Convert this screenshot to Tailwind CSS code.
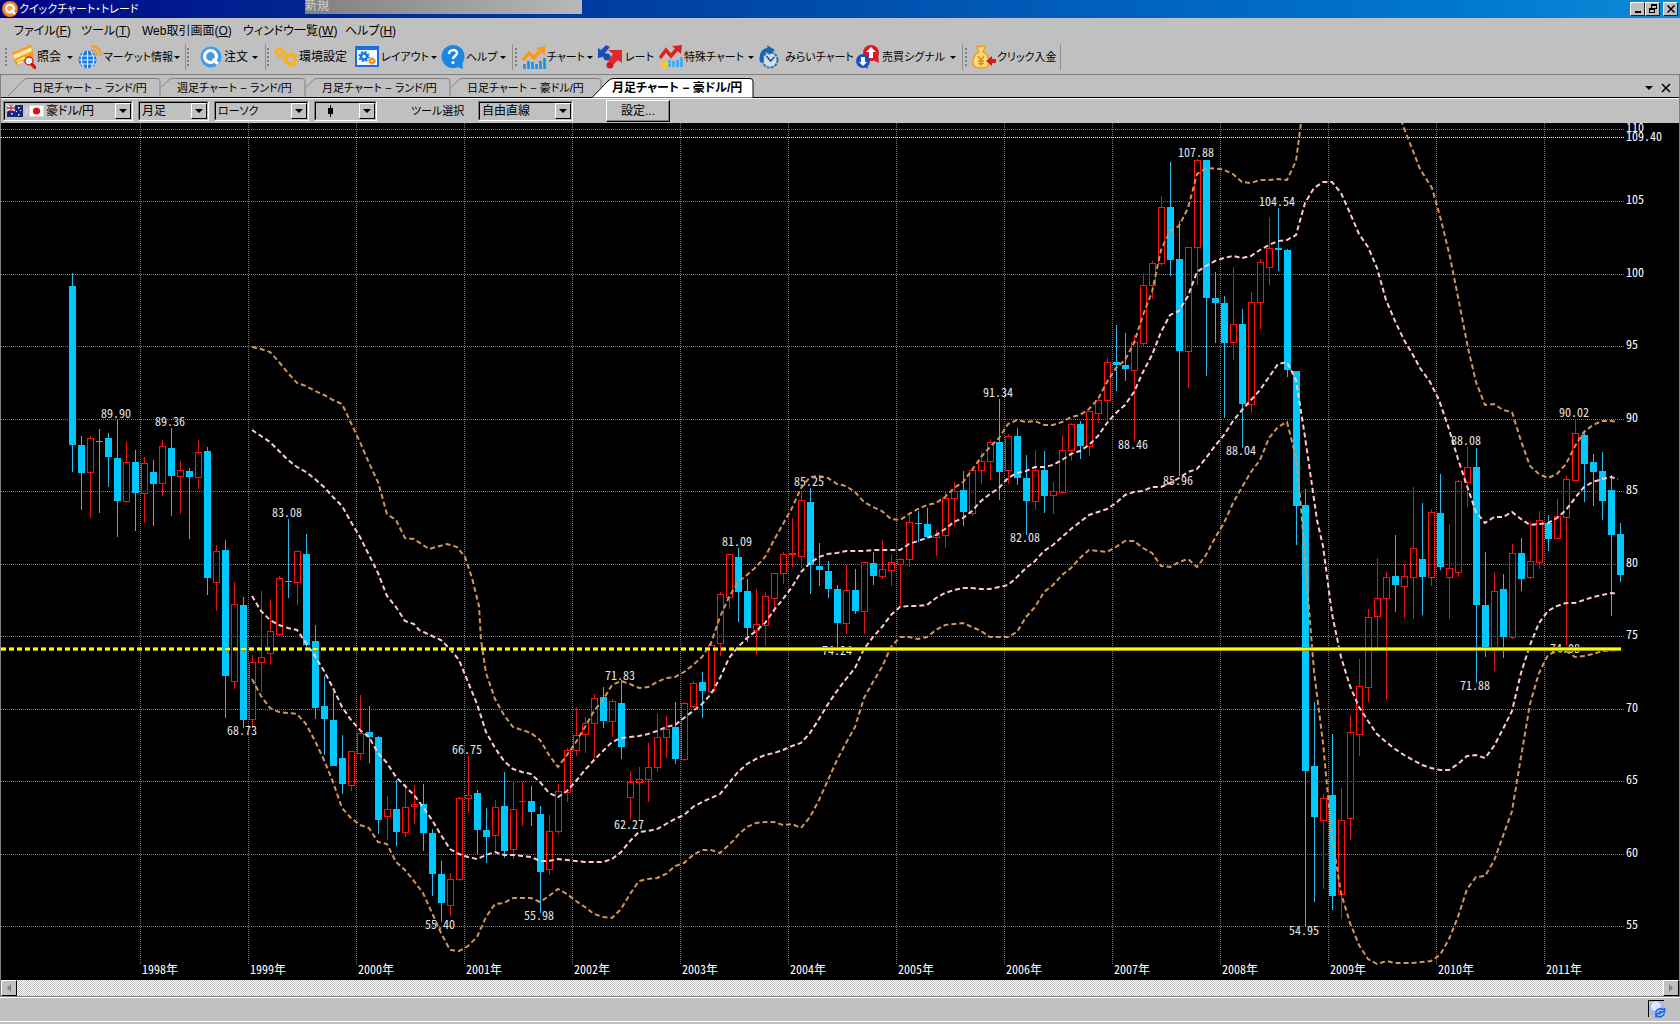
<!DOCTYPE html>
<html lang="ja">
<head>
  <meta charset="UTF-8" />
  <meta name="viewport" content="width=device-width,initial-scale=1" />
  <title>クイックチャート・トレード</title>
  <script src="https://cdn.jsdelivr.net/npm/@tailwindcss/browser@4"></script>
</head>
<body class="flex h-screen flex-col overflow-hidden bg-[#c0c0c0] font-['Liberation_Sans','Noto_Sans_CJK_JP',sans-serif] text-[12px] leading-4 text-black [font-feature-settings:'palt']">

  <!-- title bar -->
  <header class="relative flex h-[18px] shrink-0 items-center bg-linear-to-r from-[#000084] to-[#1088d8] pl-[2px] pr-[2px] text-white">
    <svg class="size-4" viewBox="0 0 16 16">
      <circle cx="8" cy="8" r="8" fill="#f08020" />
      <circle cx="8" cy="8" r="6" fill="#f6a050" />
      <circle cx="8" cy="7.5" r="3.8" fill="none" stroke="#fff" stroke-width="2" />
      <path d="M9 9l4 4" stroke="#fff" stroke-width="2" />
    </svg>
    <h1 class="ml-px text-[11px]">クイックチャート・トレード</h1>
    <div class="absolute left-[305px] top-0 h-[14px] w-[277px] bg-linear-to-r from-[#808080] to-[#b8b8b8] text-[12px] leading-[13px] text-[#d0d0d0]">新規</div>
    <div class="ml-auto flex text-black">
      <button aria-label="最小化" class="flex h-[14px] w-[15px] items-center justify-center border border-t-white border-l-white border-r-[#202020] border-b-[#202020] bg-[#c0c0c0]">
        <svg class="h-[10px] w-3" viewBox="0 0 12 10"><path d="M3 8h6" stroke="#000" stroke-width="2" /></svg>
      </button>
      <button aria-label="元に戻す" class="flex h-[14px] w-[15px] items-center justify-center border border-t-white border-l-white border-r-[#202020] border-b-[#202020] bg-[#c0c0c0]">
        <svg class="h-[10px] w-3" viewBox="0 0 12 10" fill="none" stroke="#000" shape-rendering="crispEdges"><path d="M4.500 3.500v-3h5v4h-2M4 1.500h6M2.500 4.500h5v4h-5zM2 5.500h6" /></svg>
      </button>
      <button aria-label="閉じる" class="ml-[3px] flex h-[14px] w-[15px] items-center justify-center border border-t-white border-l-white border-r-[#202020] border-b-[#202020] bg-[#c0c0c0]">
        <svg class="h-[10px] w-3" viewBox="0 0 12 10"><path d="M2.500 1.500l7 7m0-7l-7 7" stroke="#000" stroke-width="1.500" /></svg>
      </button>
    </div>
  </header>

  <!-- menu -->
  <nav class="flex h-[26px] shrink-0 items-center pl-[14px] whitespace-nowrap">
    <button class="w-[67px] text-left">ファイル(<u>F</u>)</button>
    <button class="w-[61px] text-left">ツール(<u>T</u>)</button>
    <button class="w-[101px] text-left">Web取引画面(<u>O</u>)</button>
    <button class="w-[102px] text-left">ウィンドウ一覧(<u>W</u>)</button>
    <button class="w-[60px] text-left">ヘルプ(<u>H</u>)</button>
  </nav>

  <!-- toolbar -->
  <div class="flex h-[30px] shrink-0 items-center whitespace-nowrap pb-1" id="toolbar">
    <span class="ml-[5px] mr-[5px] h-[18px] w-[2px] bg-[repeating-linear-gradient(#808080_0_2px,transparent_2px_4px)]"></span>
    <button class="flex w-[66px] items-center gap-px">
      <svg class="size-6 shrink-0" viewBox="0 0 24 24">
        <path d="M0 9q0-2 2-2L18 0q2 0 2 2l2 9q0 2-2 2L6 20q-2 0-3-2z" fill="#f9a01b" />
        <path d="M1 10l18-7.500 1 3.500L2 14z" fill="#ffe9a6" />
        <path d="M5 16l8-3.500M6 18.500l5-2" stroke="#fff3c0" stroke-width="1.500" />
        <circle cx="17" cy="16" r="4" fill="#e8f2ff" stroke="#c03030" stroke-width="1.500" />
        <path d="M20 19.500l3 3" stroke="#e01010" stroke-width="3.500" stroke-linecap="round" />
      </svg>
      照会
      <span class="ml-auto mr-[5px] border-x-[3px] border-t-[3px] border-x-transparent border-t-black"></span>
    </button>
    <button class="flex w-[107px] items-center gap-px text-[11px]">
      <svg class="size-6 shrink-0" viewBox="0 0 24 24" fill="none">
        <circle cx="9.500" cy="14.500" r="9" fill="#1c78dc" />
        <path d="M1.500 11h16M1 15h17M2 19h15M9.500 5.500v18M6 6.500c-3.500 5-3.500 11 0 16M13 6.500c3.500 5 3.500 11 0 16" stroke="#d8ecff" stroke-width="1.200" />
        <path d="M13 5c3.500 0 6 2.500 6 6M13 1c6 0 10 4 10 10" stroke="#f5a020" stroke-width="2.400" />
      </svg>
      マーケット情報
      <span class="ml-auto mr-[5px] border-x-[3px] border-t-[3px] border-x-transparent border-t-black"></span>
    </button>
    <span class="h-[26px] w-px bg-[#909090]"></span>
    <span class="ml-px mr-[10px] h-[18px] w-[2px] bg-[repeating-linear-gradient(#808080_0_2px,transparent_2px_4px)]"></span>
    <button class="flex w-[62px] items-center gap-px">
      <svg class="size-6 shrink-0" viewBox="0 0 24 24" fill="none">
        <circle cx="12" cy="12" r="12" fill="#a4c8ec" />
        <circle cx="12" cy="12" r="10.500" fill="#4c96da" />
        <circle cx="11.500" cy="11.500" r="6" stroke="#fff" stroke-width="3.200" />
        <path d="M14 14l5 5" stroke="#fff" stroke-width="3.200" />
      </svg>
      注文
      <span class="ml-auto mr-[3px] border-x-[3px] border-t-[3px] border-x-transparent border-t-black"></span>
    </button>
    <span class="ml-1 h-[26px] w-px bg-[#909090]"></span>
    <span class="ml-px mr-[5px] h-[18px] w-[2px] bg-[repeating-linear-gradient(#808080_0_2px,transparent_2px_4px)]"></span>
    <button class="flex w-[81px] items-center gap-px">
      <svg class="size-6 shrink-0" viewBox="0 0 24 24" fill="none" stroke="#f9b21c">
        <circle cx="6" cy="7.500" r="3.200" stroke-width="2.600" /><circle cx="6" cy="7.500" r="5" stroke-width="1.800" stroke-dasharray="2 1.900" />
        <circle cx="16.500" cy="14.500" r="4.400" stroke-width="3.200" /><circle cx="16.500" cy="14.500" r="6.700" stroke-width="2" stroke-dasharray="2.800 2.460" />
      </svg>
      環境設定
    </button>
    <button class="flex w-[86px] items-center gap-[2px] text-[11px]">
      <svg class="size-6 shrink-0" viewBox="0 0 24 24" fill="none">
        <path d="M0 1h24v21H0z" fill="#1a6ee0" /><path d="M2 5h20v15H2z" fill="#f4faff" />
        <circle cx="9" cy="11.500" r="3" stroke="#1478d8" stroke-width="2.400" /><circle cx="9" cy="11.500" r="4.800" stroke="#1478d8" stroke-width="1.600" stroke-dasharray="2 1.770" />
        <circle cx="17" cy="16" r="2" stroke="#f58a20" stroke-width="2" /><circle cx="17" cy="16" r="3.300" stroke="#f58a20" stroke-width="1.200" stroke-dasharray="1.300 1.290" />
      </svg>
      レイアウト
      <span class="ml-auto mr-[5px] border-x-[3px] border-t-[3px] border-x-transparent border-t-black"></span>
    </button>
    <button class="flex w-[68px] items-center gap-px text-[11px]">
      <svg class="size-6 shrink-0" viewBox="0 0 24 24">
        <circle cx="12" cy="11.500" r="11.500" fill="#1c86e0" /><path d="M14 21l8 3-1-8z" fill="#1c86e0" />
        <path d="M8 9c0-5 8-5 8-1 0 3-4 3-4 6" fill="none" stroke="#fff" stroke-width="2.500" /><circle cx="12" cy="17.500" r="1.600" fill="#fff" />
      </svg>
      ヘルプ
      <span class="ml-auto mr-[3px] border-x-[3px] border-t-[3px] border-x-transparent border-t-black"></span>
    </button>
    <span class="ml-[3px] h-[26px] w-px bg-[#909090]"></span>
    <span class="ml-[2px] mr-[5px] h-[18px] w-[2px] bg-[repeating-linear-gradient(#808080_0_2px,transparent_2px_4px)]"></span>
    <button class="flex w-[76px] items-center gap-px text-[11px]">
      <svg class="size-6 shrink-0" viewBox="0 0 24 24" fill="none">
        <path d="M2.500 24v-5m4 5v-8m4 8v-7m4 7v-5m4 5v-8m4 8V13" stroke="#1890e8" stroke-width="2.600" />
        <path d="M1 15l6-7 5 5 6-7" stroke="#f79a1c" stroke-width="3.500" /><path d="M14 3l9-2v9z" fill="#f79a1c" />
      </svg>
      チャート
      <span class="ml-auto mr-[5px] border-x-[3px] border-t-[3px] border-x-transparent border-t-black"></span>
    </button>
    <button class="flex w-[61px] items-center gap-[3px] text-[11px]">
      <svg class="size-6 shrink-0" viewBox="0 0 24 24">
        <path d="M12 2L7 8l3 3-10 2V3l3 2 5-5z" fill="#1450c0" /><circle cx="9" cy="12" r="3.500" fill="#1a48b0" />
        <circle cx="12" cy="20" r="3.500" fill="#d01818" /><path d="M10 5h14v13l-4-3-5 5-5-5 5-6z" fill="#e02828" />
      </svg>
      レート
    </button>
    <button class="flex w-[100px] items-center gap-px text-[11px]">
      <svg class="size-6 shrink-0" viewBox="0 0 24 24" fill="none">
        <path d="M10.500 22v-7m4 7v-6m4 6v-7m4 7v-10" stroke="#38a8f0" stroke-width="2.600" />
        <path d="M1 13l6-8 5 6 6-7" stroke="#e02020" stroke-width="3.500" /><path d="M13 1l10-1-1 9z" fill="#e02020" />
        <path d="M5.500 14l1.500 3.500 4 .5-3 2.500 1 3.500-3.500-2L2 24l1-3.500L0 18l4-.5z" fill="#ffc81e" />
      </svg>
      特殊チャート
      <span class="ml-auto mr-[5px] border-x-[3px] border-t-[3px] border-x-transparent border-t-black"></span>
    </button>
    <button class="flex w-[97px] items-center gap-[2px] text-[11px]">
      <svg class="size-6 shrink-0" viewBox="0 0 24 24" fill="none">
        <circle cx="11" cy="15" r="7.500" fill="#d4dde6" stroke="#2a78b4" stroke-width="2" stroke-dasharray="3 1" />
        <path d="M3 17C1 9 5 4 11 5" stroke="#1268b0" stroke-width="4" /><path d="M8 0l8 5-6 5z" fill="#1268b0" />
        <path d="M7.500 11l4 5 4-4" stroke="#1a5c96" stroke-width="1.600" />
      </svg>
      みらいチャート
    </button>
    <button class="flex w-[103px] items-center gap-[2px] text-[11px]">
      <svg class="size-6 shrink-0" viewBox="0 0 24 24">
        <circle cx="15" cy="8" r="8" fill="#d81c24" /><path d="M17 15l6 3-1-9z" fill="#d81c24" />
        <path d="M15 2l5 5h-3v6h-4V7h-3z" fill="#fff" />
        <circle cx="7" cy="16" r="7" fill="#1c50c0" /><path d="M8 21l4 3-1-6z" fill="#1c50c0" />
        <path d="M7 21l-4-4h2v-5h4v5h2z" fill="#fff" />
      </svg>
      売買シグナル
      <span class="ml-auto mr-[3px] border-x-[3px] border-t-[3px] border-x-transparent border-t-black"></span>
    </button>
    <span class="ml-[3px] h-[26px] w-px bg-[#909090]"></span>
    <span class="ml-[2px] mr-[5px] h-[18px] w-[2px] bg-[repeating-linear-gradient(#808080_0_2px,transparent_2px_4px)]"></span>
    <button class="flex w-[88px] items-center gap-px text-[11px]">
      <svg class="size-6 shrink-0" viewBox="0 0 24 24" fill="none">
        <path d="M5 1l3 1 2-1 3 1-2 5c4 2 6 6 6 10 0 4-2 6-8 6s-8-2-8-6c0-4 2-8 6-10z" fill="#ffdf7a" stroke="#f0a020" stroke-width="1.500" />
        <path d="M6 11l3 4 3-4M9 15v6M6 16h6M6 18.500h6" stroke="#e08a10" stroke-width="1.500" />
        <path d="M24 14v4h-4v3l-6-5 6-5v3z" fill="#d01c1c" />
      </svg>
      クリック入金
    </button>
    <span class="h-[26px] w-px bg-[#909090]"></span>
  </div>

  <!-- chart window -->
  <main class="flex min-h-0 flex-1 flex-col border-x border-t border-[#808080]">
    <div class="relative flex h-[23px] shrink-0 items-end border-b border-black pl-[6px] text-[11px]" role="tablist">
      <button role="tab" class="relative h-[19px] w-[154px] pl-[25px] text-left whitespace-nowrap">
        <svg class="absolute inset-0 h-[19px] w-[154px]" viewBox="0 0 154 19"><path d="M.5 18.500L16 2.500q2-2 4-2h130q3 0 3 3v15" fill="none" stroke="#808080" /></svg>
        <span class="relative">日足チャート − ランド/円</span>
      </button>
      <button role="tab" class="relative h-[19px] w-[145px] pl-4 text-left whitespace-nowrap">
        <svg class="absolute inset-0 h-[19px] w-[145px]" viewBox="0 0 145 19"><path d="M0 9.500L7 2.500q2-2 4-2h130q3 0 3 3v15" fill="none" stroke="#808080" /></svg>
        <span class="relative">週足チャート − ランド/円</span>
      </button>
      <button role="tab" class="relative h-[19px] w-[145px] pl-4 text-left whitespace-nowrap">
        <svg class="absolute inset-0 h-[19px] w-[145px]" viewBox="0 0 145 19"><path d="M0 9.500L7 2.500q2-2 4-2h130q3 0 3 3v15" fill="none" stroke="#808080" /></svg>
        <span class="relative">月足チャート − ランド/円</span>
      </button>
      <button role="tab" class="relative h-[19px] w-[151px] pl-4 text-left whitespace-nowrap">
        <svg class="absolute inset-0 h-[19px] w-[151px]" viewBox="0 0 151 19"><path d="M0 9.500L7 2.500q2-2 4-2h136q3 0 3 3v6" fill="none" stroke="#808080" /></svg>
        <span class="relative">日足チャート − 豪ドル/円</span>
      </button>
      <button role="tab" aria-selected="true" class="relative -mb-px -ml-[10px] h-5 w-[162px] pl-[20px] text-left text-[12px] font-bold whitespace-nowrap">
        <svg class="absolute inset-0 h-5 w-[162px]" viewBox="0 0 162 20"><path d="M0 19.500L16 3q3-2.500 5-2.500h137q3 0 3 3v16" fill="#fff" stroke="#000" /></svg>
        <span class="relative">月足チャート − 豪ドル/円</span>
      </button>
      <div class="mb-[4px] ml-auto mr-2 flex items-center gap-2">
        <button aria-label="タブ一覧" class="border-x-[4px] border-t-[4px] border-x-transparent border-t-black"></button>
        <button aria-label="タブを閉じる"><svg class="size-[10px]" viewBox="0 0 10 10"><path d="M1 1l8 8m0-8l-8 8" stroke="#000" stroke-width="1.500" /></svg></button>
      </div>
    </div>

    <form class="flex h-[25px] shrink-0 items-center border-t border-white pl-[2px]">
      <div class="relative h-5 w-[130px] border border-t-[#808080] border-l-[#808080] border-r-white border-b-white">
        <select aria-label="通貨ペア" class="block h-[18px] w-full appearance-none border border-t-black border-l-black border-r-[#c0c0c0] border-b-[#c0c0c0] bg-[#c0c0c0] pl-[41px] text-[12px] leading-4"><option>豪ドル/円</option></select>
        <svg class="pointer-events-none absolute left-[3px] top-[3px] h-3 w-[38px]" viewBox="0 0 38 12">
          <path d="M0 0h16v12H0z" fill="#142a80" /><path d="M0 0l8 6M8 0L0 6" stroke="#fff" stroke-width="1.500" /><path d="M4 0v6M0 3h8" stroke="#fff" stroke-width="2.500" /><path d="M4 0v6M0 3h8" stroke="#d02030" stroke-width="1.300" />
          <path d="M4 8h1.500v1.500H4zM11 2h1.500v1.500H11zM13 5h1v1h-1zM9 6h1v1H9zM11 9h1.500v1.500H11z" fill="#fff" />
          <path d="M20.500 2l-2 9" stroke="#e8e8e8" /><path d="M22.500.5h14v11h-14z" fill="#fff" stroke="#d8d8d8" /><circle cx="29.500" cy="6" r="3.600" fill="#e01010" />
        </svg>
        <span class="pointer-events-none absolute right-px top-px flex h-4 w-4 items-center justify-center border border-t-white border-l-white border-r-black border-b-black bg-[#c0c0c0]"><span class="border-x-[4px] border-t-[4px] border-x-transparent border-t-black"></span></span>
      </div>
      <div class="relative ml-[5px] h-5 w-[71px] border border-t-[#808080] border-l-[#808080] border-r-white border-b-white">
        <select aria-label="足種" class="block h-[18px] w-full appearance-none border border-t-black border-l-black border-r-[#c0c0c0] border-b-[#c0c0c0] bg-[#c0c0c0] pl-[2px] text-[12px] leading-4"><option>月足</option></select>
        <span class="pointer-events-none absolute right-px top-px flex h-4 w-4 items-center justify-center border border-t-white border-l-white border-r-black border-b-black bg-[#c0c0c0]"><span class="border-x-[4px] border-t-[4px] border-x-transparent border-t-black"></span></span>
      </div>
      <div class="relative ml-[5px] h-5 w-[95px] border border-t-[#808080] border-l-[#808080] border-r-white border-b-white">
        <select aria-label="チャート種類" class="block h-[18px] w-full appearance-none border border-t-black border-l-black border-r-[#c0c0c0] border-b-[#c0c0c0] bg-[#c0c0c0] pl-[2px] text-[11px] leading-4"><option>ローソク</option></select>
        <span class="pointer-events-none absolute right-px top-px flex h-4 w-4 items-center justify-center border border-t-white border-l-white border-r-black border-b-black bg-[#c0c0c0]"><span class="border-x-[4px] border-t-[4px] border-x-transparent border-t-black"></span></span>
      </div>
      <div class="relative ml-[5px] h-5 w-[63px] border border-t-[#808080] border-l-[#808080] border-r-white border-b-white">
        <select aria-label="ローソク幅" class="block h-[18px] w-full appearance-none border border-t-black border-l-black border-r-[#c0c0c0] border-b-[#c0c0c0] bg-[#c0c0c0]"><option></option></select>
        <svg class="pointer-events-none absolute left-[12px] top-[3px] h-3 w-[7px]" viewBox="0 0 7 12"><path d="M1 3h5v6H1zM3 0h1v12H3z" /></svg>
        <span class="pointer-events-none absolute right-px top-px flex h-4 w-4 items-center justify-center border border-t-white border-l-white border-r-black border-b-black bg-[#c0c0c0]"><span class="border-x-[4px] border-t-[4px] border-x-transparent border-t-black"></span></span>
      </div>
      <label for="tool" class="ml-[34px] w-[67px] text-[11px]">ツール選択</label>
      <div class="relative h-5 w-[95px] border border-t-[#808080] border-l-[#808080] border-r-white border-b-white">
        <select id="tool" class="block h-[18px] w-full appearance-none border border-t-black border-l-black border-r-[#c0c0c0] border-b-[#c0c0c0] bg-[#c0c0c0] pl-[2px] text-[12px] leading-4"><option>自由直線</option></select>
        <span class="pointer-events-none absolute right-px top-px flex h-4 w-4 items-center justify-center border border-t-white border-l-white border-r-black border-b-black bg-[#c0c0c0]"><span class="border-x-[4px] border-t-[4px] border-x-transparent border-t-black"></span></span>
      </div>
      <button type="button" class="ml-[33px] h-[22px] w-[64px] border border-t-white border-l-white border-r-black border-b-black text-[12px] shadow-[inset_-1px_-1px_0_#808080]">設定...</button>
    </form>

    <div class="min-h-0 flex-1 bg-black">
      <svg id="chart" class="block size-full font-['Noto_Sans_CJK_JP',sans-serif] text-[12px]" viewBox="1 123 1678 857" role="img" aria-label="豪ドル/円 月足"></svg>
    </div>

    <!-- scroll bar -->
    <div class="flex h-4 shrink-0 justify-between bg-[repeating-conic-gradient(#c0c0c0_0_25%,#fff_0_50%)] bg-size-[2px_2px]">
      <button aria-label="左へ" class="flex w-4 items-center justify-center border border-t-white border-l-white border-r-black border-b-black bg-[#c0c0c0]"><span class="border-y-[4px] border-r-[4px] border-y-transparent border-r-[#808080]"></span></button>
      <button aria-label="右へ" class="flex w-4 items-center justify-center border border-t-white border-l-white border-r-black border-b-black bg-[#c0c0c0]"><span class="border-y-[4px] border-l-[4px] border-y-transparent border-l-[#808080]"></span></button>
    </div>
  </main>

  <!-- status bar -->
  <footer class="mb-[2px] flex h-[26px] shrink-0 items-start justify-end border-t border-b border-t-[#808080] border-b-white pr-[14px] shadow-[inset_0_1px_0_#fff]">
    <svg class="mt-[3px] h-[18px] w-[18px]" viewBox="0 0 18 18" fill="none">
      <path d="M.5 17V.5H16" stroke="#000" />
      <circle cx="9" cy="8.500" r="7.500" fill="#9cbcf4" /><circle cx="8" cy="6.500" r="5" fill="#dce8ff" />
      <path d="M7.500 12c2-4 6-4 8-2M11 12h5.500V8M16.500 13.500c-2 4-6 4-8 2M13 13.500H8v4" stroke="#1068e0" stroke-width="1.600" />
    </svg>
  </footer>

  <script>
    // one row per month: U = rise, D = fall, then high, body top, body bottom, low
    const CANDLES = `
      D 273 286 445 472|D 436 445 473 510|U 436 438 472 518|D 429 441 442 513|D 433 438 457 487|D 420 458 501 537
      U 442 462 501 503|D 450 462 493 531|U 457 463 493 523|D 460 472 484 526|U 440 446 483 496|D 428 448 476 516
      U 461 470 476 514|D 468 471 477 539|U 440 452 477 489|D 447 451 578 595|U 545 551 582 611|D 540 550 676 718
      U 582 604 681 689|D 597 605 720 728|U 655 662 719 728|U 591 657 662 692|U 600 631 653 665|U 576 578 634 637
      D 519 581 582 598|U 550 551 582 605|D 534 554 645 647|D 625 641 708 719|D 676 706 719 755|D 692 720 766 766
      D 735 758 784 794|U 751 751 785 791|U 695 733 753 760|D 706 732 737 763|D 736 737 820 834|U 796 809 816 840
      D 780 809 832 846|U 784 807 832 837|U 785 804 806 824|D 784 804 833 851|D 829 833 874 896|D 861 874 903 922
      U 873 879 905 916|U 797 798 879 881|U 756 795 798 813|D 790 793 830 854|D 808 830 837 863|U 800 807 835 852
      D 772 806 851 858|U 781 809 849 859|U 782 801 801 826|D 786 801 812 826|D 806 814 872 913|U 815 831 869 875
      U 784 791 831 834|U 748 750 792 802|U 707 735 750 756|U 717 723 734 753|U 694 698 723 758|D 687 697 721 728
      U 699 701 721 737|D 680 703 747 759|U 771 782 797 820|U 767 779 782 820|U 743 767 779 802|U 714 737 767 772
      U 716 729 737 758|D 702 727 759 764|U 702 703 759 761|U 681 683 706 708|D 672 682 691 718|U 644 645 691 691
      U 592 594 643 656|U 554 554 597 609|D 548 557 592 622|D 579 591 628 642|U 589 624 630 655|U 592 596 625 646
      U 573 573 598 613|U 552 554 573 584|U 518 553 554 567|U 492 500 556 568|D 488 502 565 594|D 543 566 570 586
      D 561 571 589 598|D 585 589 623 647|U 565 590 623 634|D 569 590 611 614|U 562 562 611 634|D 552 563 576 585
      U 540 569 576 579|U 554 562 570 586|U 558 559 564 607|U 512 522 559 567|D 511 523 524 542|D 508 524 537 537
      U 530 535 537 556|U 491 498 535 548|U 482 491 498 526|D 471 490 512 526|U 470 470 513 516|U 452 461 470 484
      U 439 442 461 480|D 399 442 472 500|U 434 436 470 484|D 428 436 478 485|D 455 478 501 535|U 450 470 501 510
      D 451 470 496 513|U 482 491 495 514|U 435 450 492 494|U 423 424 450 461|D 421 424 446 459|U 411 411 446 456
      U 398 400 413 423|U 358 362 400 421|D 325 362 365 391|D 333 365 369 381|U 335 342 370 442|U 273 285 343 347
      U 261 263 285 299|U 196 207 263 266|D 162 207 260 276|D 221 259 351 476|U 247 247 351 388|U 159 160 247 285
      D 160 160 298 376|D 272 298 303 343|D 296 303 343 418|U 267 324 342 360|D 309 324 404 448|U 292 302 404 413
      U 259 262 302 329|U 217 248 267 285|D 208 248 250 271|D 249 250 370 377|D 371 371 506 545|D 489 505 771 927
      D 702 766 817 902|U 794 798 820 889|D 734 795 896 910|U 788 820 894 919|U 715 732 818 840|U 659 686 734 756
      U 609 617 687 702|U 558 598 616 651|U 572 577 598 700|D 535 576 585 612|U 564 576 586 618|U 487 548 577 619
      D 503 559 577 615|U 509 512 577 586|D 474 513 567 570|U 524 568 577 619|U 480 481 572 577|U 447 467 482 507
      D 448 467 605 683|D 552 605 647 657|U 572 591 647 671|D 574 589 637 658|U 544 553 637 639|D 538 553 579 591
      U 522 561 577 579|U 511 520 562 569|D 515 523 539 551|U 499 516 538 539|U 476 479 517 646|U 419 433 480 480
      D 430 435 464 502|D 454 462 472 506|D 452 471 501 520|D 475 490 535 616|D 523 534 575 582`;

    const BANDS = [
      ["#d2955a", "252,347 261,349 270,352 279,362 288,373 297,383 306,386 315,391 324,395 333,400 342,404 351,423 360,442 369,463 378,482 387,514 396,520 405,538 414,539 429,549 447,544 457,547 465,557 472,578 479,606 481,640 486,673 495,699 504,715 513,727 522,730 531,733 540,740 549,755 558,767 567,755 576,742 585,727 594,711 603,700 612,685 621,681 630,684 639,688 648,687 657,682 666,678 675,677 684,672 693,665 702,657 711,643 720,617 729,597 738,582 747,575 756,567 765,557 774,540 783,524 792,508 801,488 810,477 819,476 828,478 837,484 846,486 855,492 864,502 873,507 882,511 891,519 900,520 909,514 918,509 927,505 936,503 945,497 954,488 963,482 972,470 981,457 990,447 999,438 1008,424 1017,420 1026,422 1035,421 1044,425 1053,425 1062,422 1071,417 1080,415 1089,409 1098,399 1107,382 1116,368 1125,360 1134,343 1143,315 1152,292 1161,250 1170,231 1179,226 1188,208 1197,174 1206,168 1220,169 1224,170 1233,174 1242,182 1251,183 1260,180 1269,180 1278,179 1287,180 1296,161 1301,123 1307,80"],
      ["#d2955a", "1395,105 1402,123 1420,169 1432,188 1441,220 1450,257 1458,297 1468,348 1476,382 1485,405 1494,404 1503,410 1512,412 1521,441 1530,466 1539,474 1548,478 1557,474 1566,464 1575,446 1584,432 1593,425 1602,421 1611,421 1618,422"],
      ["#d2955a", "252,679 261,696 270,708 279,712 288,713 297,714 306,724 315,741 324,760 333,782 342,808 351,818 360,825 369,828 378,842 387,844 396,862 405,870 414,881 423,893 432,913 441,933 450,950 459,951 468,946 477,937 486,917 495,904 504,903 513,898 522,898 531,898 540,902 549,896 558,889 567,894 576,901 585,907 594,914 603,917 612,918 621,909 630,894 639,881 648,879 657,878 666,874 675,866 684,863 693,855 702,850 711,850 720,853 734,840 738,835 747,827 756,823 765,822 774,822 783,825 792,824 801,828 810,817 819,800 828,780 837,760 846,743 855,727 864,698 873,682 882,667 891,647 900,637 909,637 918,639 927,637 936,630 945,625 954,624 963,623 972,627 981,631 990,637 999,637 1008,637 1017,632 1026,617 1035,607 1044,592 1053,585 1062,575 1071,568 1080,558 1089,550 1098,551 1107,552 1116,547 1125,541 1134,541 1143,548 1152,553 1161,566 1170,567 1179,562 1188,559 1197,567 1206,555 1215,538 1224,523 1233,503 1242,487 1251,472 1260,460 1269,438 1278,427 1287,422 1296,457 1301,507 1306,571 1314,671 1323,743 1328,796 1332,836 1341,893 1350,923 1359,945 1368,959 1377,964 1387,961 1395,963 1404,963 1413,963 1422,962 1431,961 1440,955 1449,939 1458,917 1467,889 1476,877 1485,876 1494,861 1503,836 1512,811 1521,757 1530,704 1539,673 1548,655 1557,651 1566,651 1575,657 1584,656 1593,654 1602,651 1618,650"],
      ["#ffc8d2", "252,430 261,436 270,442 279,451 288,460 297,467 306,472 315,479 324,487 333,497 342,506 351,522 360,537 369,555 378,573 387,596 396,607 405,621 414,624 419,630 441,640 450,649 459,660 468,682 477,704 486,732 495,748 504,761 513,769 522,772 531,774 540,782 549,793 558,797 567,791 576,781 585,770 594,760 603,751 612,742 621,738 630,737 639,736 648,734 657,731 666,727 675,725 684,718 693,711 702,704 711,694 720,678 729,658 738,647 747,638 756,631 765,623 774,610 783,599 792,587 801,572 810,563 819,557 828,554 837,553 846,551 855,551 864,551 873,550 882,550 891,550 900,550 909,544 918,541 927,538 936,535 945,529 954,522 963,518 972,511 981,501 990,494 999,488 1008,478 1017,473 1026,471 1035,467 1044,467 1053,465 1062,460 1071,454 1080,451 1089,445 1098,436 1107,423 1116,413 1125,405 1134,392 1143,372 1152,355 1161,332 1170,315 1179,311 1188,296 1197,272 1206,266 1215,261 1224,258 1233,256 1242,258 1251,256 1260,250 1269,245 1278,241 1287,240 1296,235 1305,203 1314,188 1323,182 1332,182 1341,193 1350,213 1359,234 1368,247 1377,268 1386,300 1395,321 1404,340 1413,355 1420,368 1430,382 1439,400 1449,429 1458,459 1467,486 1476,512 1485,523 1494,517 1503,517 1512,512 1521,519 1530,525 1539,524 1548,523 1557,518 1566,510 1575,498 1584,487 1593,482 1602,479 1611,477 1618,479"],
      ["#ffc8d2", "252,596 261,611 270,620 279,625 288,628 297,630 306,643 315,656 324,671 333,688 342,707 351,720 360,730 369,737 378,753 387,763 396,777 405,786 414,795 423,807 432,820 441,835 450,849 459,854 468,857 477,859 486,855 495,852 504,855 513,855 522,856 531,857 540,861 549,861 558,859 567,860 576,861 585,862 594,862 603,862 612,859 621,852 630,841 639,832 648,831 657,829 666,824 675,819 684,815 693,807 702,802 711,798 720,794 729,783 738,772 747,764 756,759 765,755 774,753 783,750 792,746 801,743 810,733 819,719 828,704 837,691 846,679 855,668 864,649 873,637 882,627 891,615 900,607 909,606 918,606 927,605 936,598 945,593 954,590 963,588 972,588 981,589 990,589 999,587 1008,585 1017,577 1026,568 1035,561 1044,551 1053,545 1062,537 1071,529 1080,522 1089,515 1098,512 1107,509 1116,503 1125,495 1134,492 1143,491 1152,487 1161,487 1170,483 1179,478 1188,472 1197,469 1206,458 1215,446 1224,435 1233,421 1242,410 1251,400 1260,390 1269,377 1278,364 1287,362 1296,380 1305,437 1317,520 1323,546 1332,614 1341,657 1350,686 1359,707 1368,721 1377,734 1386,742 1395,749 1404,755 1413,760 1422,765 1431,768 1440,770 1449,770 1458,764 1467,756 1476,755 1485,758 1494,746 1503,729 1512,711 1521,673 1530,645 1539,623 1548,611 1557,606 1566,603 1575,603 1584,600 1593,597 1602,595 1611,593 1618,594"]
    ];

    // swing highs and lows: text, centre x, centre y
    const MARKS = [
      ["89.90", 116, 414], ["89.36", 170, 422], ["83.08", 287, 513], ["68.73", 242, 731], ["66.75", 467, 750],
      ["55.40", 440, 925], ["55.98", 539, 916], ["71.83", 620, 676], ["62.27", 629, 825], ["81.09", 737, 542],
      ["85.25", 809, 482], ["74.24", 837, 651], ["91.34", 998, 393], ["82.08", 1025, 538], ["88.46", 1133, 445],
      ["88.04", 1241, 451], ["85.96", 1178, 481], ["107.88", 1196, 153], ["104.54", 1277, 202], ["88.08", 1466, 441],
      ["90.02", 1574, 413], ["74.08", 1565, 649], ["71.88", 1475, 686], ["54.95", 1304, 931]
    ];

    const chart = document.getElementById("chart");

    function add(tag, attrs, text) {
      const el = document.createElementNS("http://www.w3.org/2000/svg", tag);
      for (const k in attrs) el.setAttribute(k, attrs[k]);
      if (text) el.textContent = text;
      chart.appendChild(el);
    }

    function line(x1, y1, x2, y2, stroke, extra) {
      add("line", { x1, y1, x2, y2, stroke, "shape-rendering": "crispEdges", ...extra });
    }

    const priceY = p => Math.floor(129 + (110 - p) * 14.5);

    // grid and axis labels
    for (let p = 110; p >= 55; p -= 5) {
      line(1, priceY(p) + 0.5, 1624, priceY(p) + 0.5, "#78785a", { "stroke-dasharray": "1 1" });
      add("text", { x: 1626, y: priceY(p) + 3, fill: "#fff", class: "[font-feature-settings:'hwid']" }, String(p));
    }
    for (let year = 1998; year <= 2011; year++) {
      const x = 140 + (year - 1998) * 108;
      line(x + 0.5, 123, x + 0.5, 964, "#78785a", { "stroke-dasharray": "1 1" });
      add("text", { x: x + 2, y: 974, fill: "#fff", class: "[font-feature-settings:'hwid']" }, year + "年");
    }
    line(1, 137.5, 1624, 137.5, "#fff", { "stroke-dasharray": "1 1" });
    add("text", { x: 1626, y: 141, fill: "#fff", class: "[font-feature-settings:'hwid']" }, "109.40");

    CANDLES.trim().split(/[|\n]/).forEach((row, i) => {
      const [dir, hi, top, bottom, lo] = row.trim().split(" ").map((v, n) => n ? +v : v);
      const x = 72 + i * 9;
      if (dir === "D") {
        line(x + 0.5, hi, x + 0.5, lo, "#2cb8ec");
        add("rect", { x: x - 3, y: top, width: 7, height: Math.max(1, bottom - top), fill: "#00c8ff", "shape-rendering": "crispEdges" });
      } else {
        line(x + 0.5, hi, x + 0.5, top, "#e01414");
        line(x + 0.5, bottom, x + 0.5, lo, "#e01414");
        add("rect", { x: x - 2.5, y: top + 0.5, width: 6, height: Math.max(0.1, bottom - top), fill: "none", stroke: "#ff1010", "shape-rendering": "crispEdges" });
      }
    });

    MARKS.forEach(([text, x, y]) => {
      add("text", { x, y: y + 4, fill: "#e4e4e4", "text-anchor": "middle", class: "[font-feature-settings:'hwid']" }, text);
    });

    BANDS.forEach(([stroke, points]) => {
      add("polyline", { points, stroke, fill: "none", "stroke-width": 2, "stroke-dasharray": "5 3" });
    });

    // horizontal support line
    line(1, 649, 738, 649, "#a0a000", { "stroke-width": 4, "stroke-dasharray": "5 3" });
    line(1, 649, 738, 649, "#ffff00", { "stroke-width": 2, "stroke-dasharray": "5 3" });
    line(738, 649, 1621, 649, "#a0a000", { "stroke-width": 4 });
    line(738, 649, 1621, 649, "#ffff00", { "stroke-width": 2 });
  </script>
</body>
</html>
